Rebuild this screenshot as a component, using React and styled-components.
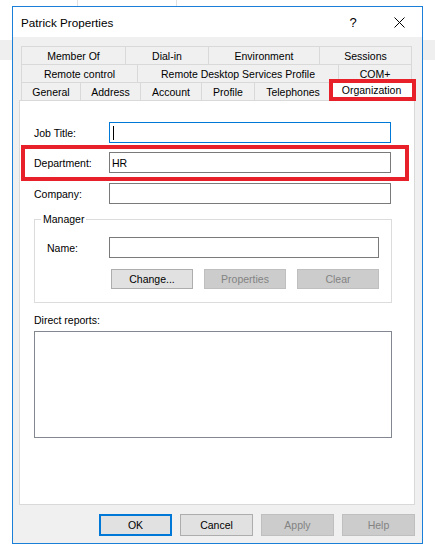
import React from 'react';
import styled, { createGlobalStyle } from 'styled-components';

const GlobalStyle = createGlobalStyle`
  html, body { margin: 0; padding: 0; }
  body {
    width: 435px;
    height: 552px;
    overflow: hidden;
    font-family: "Liberation Sans", Arial, sans-serif;
    color: #000;
    background:
      linear-gradient(#e2e2e2, #e2e2e2) 77px 0 / 1px 6px no-repeat,
      linear-gradient(#e2e2e2, #e2e2e2) 176px 0 / 1px 6px no-repeat,
      linear-gradient(#efefef, #efefef) 0 40px / 100% 20px no-repeat,
      #ffffff;
  }
  * { box-sizing: border-box; }
`;

const Desktop = styled.div`
  padding: 6px 0 0 12px;
`;

const Window = styled.div`
  width: 411px;
  height: 538px;
  border: 1px solid #1a7fd6;
  background: #f0f0f0;
  display: flex;
  flex-direction: column;
`;

const TitleBar = styled.div`
  height: 30px;
  flex: none;
  background: #fff;
  display: flex;
  align-items: center;
`;

const Title = styled.div`
  flex: 1;
  padding-left: 8px;
  font-size: 11.7px;
`;

const CaptionButton = styled.div`
  width: 46px;
  height: 30px;
  display: flex;
  align-items: center;
  justify-content: center;
  font-size: 13px;
`;

const Body = styled.div`
  flex: 1;
  display: flex;
  flex-direction: column;
  padding: 9px 7px 7px 6px;
`;

const Tabs = styled.div`
  margin-left: 2px;
  display: flex;
  flex-direction: column;
`;

const TabRow = styled.div`
  height: 18px;
  display: flex;
  align-items: flex-start;
`;

const Tab = styled.div`
  position: relative;
  width: ${p => p.$w}px;
  height: ${p => (p.$selected ? 21 : 18)}px;
  margin-top: ${p => (p.$selected ? -2 : 0)}px;
  margin-left: ${p => (p.$selected ? -2 : 0)}px;
  margin-right: -1px;
  border: 1px solid #d9d9d9;
  border-bottom: none;
  background: ${p => (p.$selected ? '#fff' : '#f0f0f0')};
  z-index: ${p => (p.$selected ? 2 : 0)};
  display: flex;
  align-items: center;
  justify-content: center;
  font-size: 10.5px;
  white-space: nowrap;
  padding-bottom: ${p => (p.$selected ? 3 : 0)}px;

  ${p =>
    p.$selected &&
    `
    &::after {
      content: '';
      position: absolute;
      top: -2px;
      left: -1px;
      right: -3px;
      bottom: 0;
      border: 4px solid #e8202a;
    }
  `}
`;

const Panel = styled.div`
  height: 405px;
  background: #fff;
  border: 1px solid #d9d9d9;
  padding: 20px 0 0 14px;
  display: flex;
  flex-direction: column;
`;

const Row = styled.div`
  display: flex;
  align-items: center;
  margin-top: ${p => p.$mt || 0}px;
`;

const Label = styled.div`
  width: ${p => p.$w}px;
  flex: none;
  font-size: 10.5px;
`;

const TextBox = styled.div`
  width: ${p => p.$w}px;
  height: 21px;
  border: 1px solid ${p => (p.$focused ? '#0078d7' : '#7a7a7a')};
  background: #fff;
  display: flex;
  align-items: center;
  padding-left: 2px;
  font-size: 10.5px;
`;

const Caret = styled.span`
  display: inline-block;
  width: 1px;
  height: 14px;
  margin-left: 1px;
  background: #000;
`;

const Highlight = styled.div`
  width: 388px;
  margin: 2px 0 0 -13px;
  border: 4px solid #e8202a;
  padding: 3px 14px 4px 9px;
`;

const Group = styled.div`
  position: relative;
  width: 358px;
  height: 84px;
  margin-top: 15px;
  border: 1px solid #dcdcdc;
  padding: 17px 0 0 12px;
`;

const Legend = styled.div`
  position: absolute;
  top: -7px;
  left: 6px;
  padding: 0 2px;
  background: #fff;
  font-size: 10.5px;
  line-height: 13px;
`;

const ButtonRow = styled.div`
  display: flex;
  gap: 11px;
  margin: 11px 0 0 64px;
`;

const Button = styled.div`
  width: ${p => p.$w}px;
  height: ${p => p.$h}px;
  flex: none;
  display: flex;
  align-items: center;
  justify-content: center;
  font-size: 10.5px;
  background: ${p => (p.$disabled ? '#cccccc' : '#e1e1e1')};
  color: ${p => (p.$disabled ? '#838383' : '#000')};
  border: ${p =>
    p.$default ? '2px solid #0078d7' : `1px solid ${p.$disabled ? '#bfbfbf' : '#adadad'}`};
`;

const SectionLabel = styled.div`
  margin-top: 11px;
  font-size: 10.5px;
  line-height: 13px;
`;

const ListBox = styled.div`
  width: 358px;
  height: 107px;
  margin-top: 4px;
  border: 1px solid #828790;
  background: #fff;
`;

const Footer = styled.div`
  margin-top: 9px;
  display: flex;
  justify-content: flex-end;
  gap: 8px;
`;

const tabRows = [
  [
    { t: 'Member Of', w: 105 },
    { t: 'Dial-in', w: 84 },
    { t: 'Environment', w: 112 },
    { t: 'Sessions', w: 93 },
  ],
  [
    { t: 'Remote control', w: 117 },
    { t: 'Remote Desktop Services Profile', w: 202 },
    { t: 'COM+', w: 74 },
  ],
  [
    { t: 'General', w: 60 },
    { t: 'Address', w: 61 },
    { t: 'Account', w: 62 },
    { t: 'Profile', w: 54 },
    { t: 'Telephones', w: 78 },
    { t: 'Organization', w: 85, selected: true },
  ],
];

const CloseIcon = () => (
  <svg width="11" height="11" viewBox="0 0 11 11">
    <path d="M0.5 0.5 L10.5 10.5 M10.5 0.5 L0.5 10.5" stroke="#000" strokeWidth="1" fill="none" />
  </svg>
);

export default function App() {
  return (
    <>
      <GlobalStyle />
      <Desktop>
        <Window>
          <TitleBar>
            <Title>Patrick Properties</Title>
            <CaptionButton>?</CaptionButton>
            <CaptionButton>
              <CloseIcon />
            </CaptionButton>
          </TitleBar>
          <Body>
            <Tabs>
              {tabRows.map((row, i) => (
                <TabRow key={i}>
                  {row.map(tab => (
                    <Tab key={tab.t} $w={tab.w} $selected={tab.selected}>
                      {tab.t}
                    </Tab>
                  ))}
                </TabRow>
              ))}
            </Tabs>
            <Panel>
              <Row $mt={1}>
                <Label $w={75}>Job Title:</Label>
                <TextBox $w={282} $focused>
                  <Caret />
                </TextBox>
              </Row>
              <Highlight>
                <Row>
                  <Label $w={75}>Department:</Label>
                  <TextBox $w={282}>HR</TextBox>
                </Row>
              </Highlight>
              <Row $mt={2}>
                <Label $w={75}>Company:</Label>
                <TextBox $w={282} />
              </Row>
              <Group>
                <Legend>Manager</Legend>
                <Row>
                  <Label $w={62}>Name:</Label>
                  <TextBox $w={270} />
                </Row>
                <ButtonRow>
                  <Button $w={82} $h={20}>Change...</Button>
                  <Button $w={82} $h={20} $disabled>Properties</Button>
                  <Button $w={82} $h={20} $disabled>Clear</Button>
                </ButtonRow>
              </Group>
              <SectionLabel>Direct reports:</SectionLabel>
              <ListBox />
            </Panel>
            <Footer>
              <Button $w={73} $h={22} $default>OK</Button>
              <Button $w={73} $h={22}>Cancel</Button>
              <Button $w={73} $h={22} $disabled>Apply</Button>
              <Button $w={73} $h={22} $disabled>Help</Button>
            </Footer>
          </Body>
        </Window>
      </Desktop>
    </>
  );
}
